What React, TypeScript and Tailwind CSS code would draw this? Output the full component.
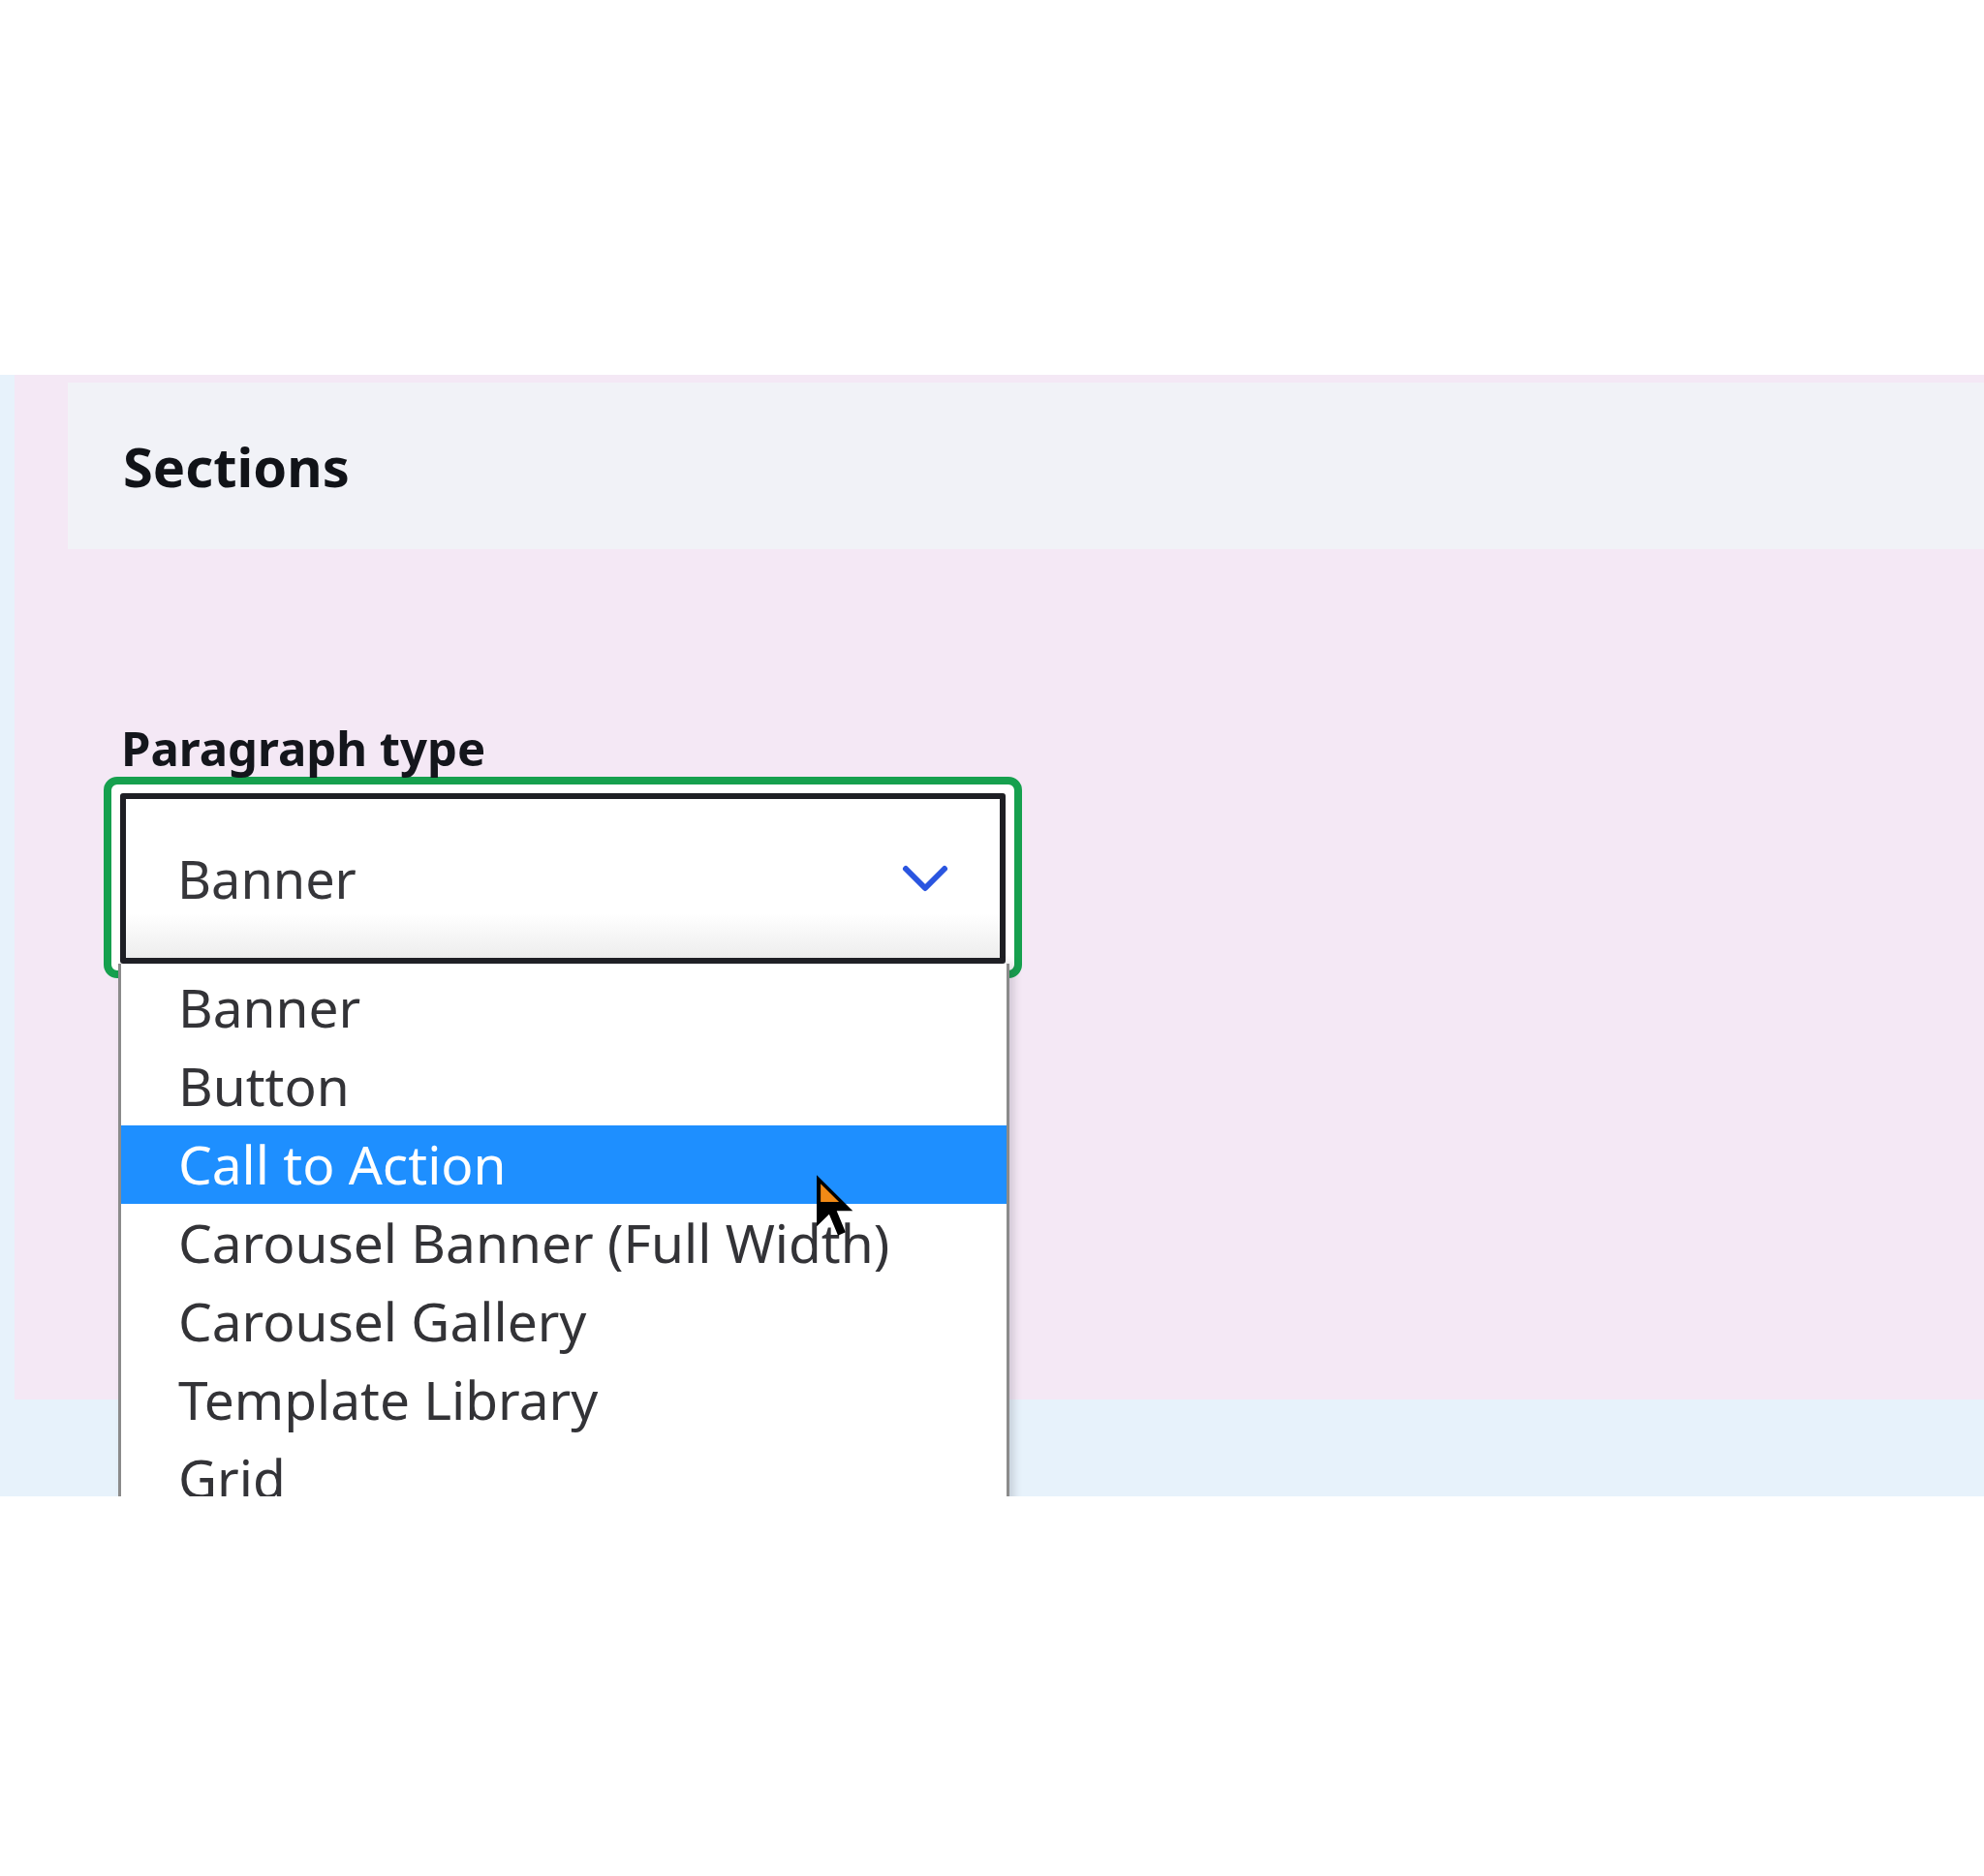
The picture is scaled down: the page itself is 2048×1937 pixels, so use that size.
import React from "react";

const options = [
  "Banner",
  "Button",
  "Call to Action",
  "Carousel Banner (Full Width)",
  "Carousel Gallery",
  "Template Library",
  "Grid",
];

function Chevron() {
  return (
    <svg width="50" height="30" viewBox="0 0 50 30" fill="none">
      <polyline
        points="5,5 25,25 45,5"
        stroke="#2a55e0"
        strokeWidth="6"
        strokeLinecap="round"
        strokeLinejoin="round"
      />
    </svg>
  );
}

function Cursor() {
  return (
    <svg width="42" height="66" viewBox="0 0 12 19.5">
      <path d="M0.4,0.4 L0.4,16 L4.2,12.3 L6.9,18.8 L9.2,17.8 L6.5,11.3 L11.4,11.3 Z" fill="#000" />
      <path d="M1.6,3 L1.6,8.6 L7.2,8.6 Z" fill="#f28a16" />
    </svg>
  );
}

export default function App() {
  return (
    <div className="w-[2048px] h-[1937px] bg-white font-['Noto_Sans',sans-serif]">
      <div className="h-[387px]" />

      <div className="relative h-[1158px] overflow-hidden bg-[#e7f2fb] pl-[15px]">
        {/* Paragraph panel */}
        <div className="h-[1058px] bg-[#f4e8f5] pt-[8px] pl-[55px]">
          <div className="h-[172px] bg-[#f1f2f7] flex items-center pl-[57px]">
            <h2 className="text-[56px] leading-none font-bold text-[#111318]">Sections</h2>
          </div>

          <div className="ml-[37px] pt-[175px]">
            <label className="block ml-[18px] text-[49px] leading-[60px] font-bold text-[#14161c]">
              Paragraph type
            </label>
            <div className="w-[948px] h-[208px] rounded-[14px] border-[8px] border-[#16a04e] bg-white p-[9px] pb-[7px]">
              <div className="h-full border-[6px] border-[#1e1f24] rounded-[3px] bg-[linear-gradient(to_bottom,#ffffff_72%,#ededed)] flex items-center justify-between pl-[53px] pr-[52px]">
                <span className="text-[54px] text-[#36363a]">Banner</span>
                <Chevron />
              </div>
            </div>
          </div>
        </div>

        {/* open option list */}
        <div className="absolute left-[122px] top-[608px] w-[920px] h-[700px] bg-white border-x-[3px] border-[#8b8b8b] pt-[5px] shadow-[5px_0_8px_rgba(60,60,80,0.18)]">
          {options.map((opt) => (
            <div
              key={opt}
              className={
                opt === "Call to Action"
                  ? "h-[81px] flex items-center pl-[59px] text-[55px] bg-[#1e8fff] text-white"
                  : "h-[81px] flex items-center pl-[59px] text-[55px] text-[#333337]"
              }
            >
              {opt}
            </div>
          ))}
        </div>

        <div className="absolute left-[841px] top-[825px]">
          <Cursor />
        </div>
      </div>
    </div>
  );
}
